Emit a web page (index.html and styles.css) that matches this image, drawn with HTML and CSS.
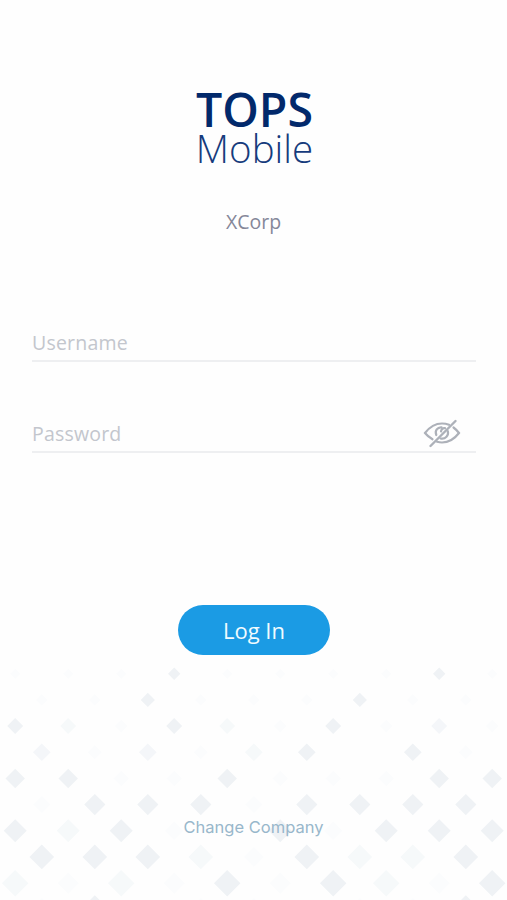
FILE: index.html
```html
<!DOCTYPE html>
<html lang="en">
<head>
<meta charset="utf-8">
<title>TOPS Mobile</title>
<link rel="stylesheet" href="styles.css">
</head>
<body>
<main class="screen">
  <svg class="pattern" id="pattern" viewBox="0 0 507 240" aria-hidden="true"></svg>
  <header class="brand">
    <h1 class="logo"><span class="logo-top">TOPS</span><span class="logo-sub">Mobile</span></h1>
    <p class="company">XCorp</p>
  </header>
  <form class="form">
    <div class="field"><input class="input" type="text" placeholder="Username"></div>
    <div class="field">
      <input class="input" type="password" placeholder="Password">
      <svg class="eye" viewBox="0 0 38 30">
        <path d="M9.500 21.300C6.500 19.500 4 17.500 2 15C7 8.500 12.500 5.500 19 5.500C21.500 5.500 24 6 26 6.800M30.500 9.500C32.500 11 34.500 13 36 15C31 21.500 25.500 24.500 19 24.500C17.500 24.500 15.500 24.200 14 23.800"/>
        <path d="M13.300 17C11.500 12.500 14.500 9 18.500 9.300M18 13.500C18.300 11 20 9.800 22 10.200M17.500 20.500C22.500 21.500 26 17.500 24.800 13"/>
        <path class="slash" d="M7.500 28L32.500 3"/>
      </svg>
    </div>
    <button class="login" type="button">Log In</button>
  </form>
  <a class="change">Change Company</a>
</main>
<script src="pattern.js"></script>
</body>
</html>
```
FILE: styles.css
```css
* { box-sizing: border-box; }
body { margin: 0; background: #fefefe; font-family: "Open Sans", sans-serif; }
.screen { position: relative; height: 900px; overflow: hidden; display: flex; flex-direction: column; align-items: center; }
.pattern { position: absolute; left: 0; bottom: 0; width: 507px; height: 240px; z-index: -1; }
.tone-d { fill: #eff2f5; }
.tone-m { fill: #f4f6f9; }
.tone-l { fill: #f6f9fa; }
.tone-f { fill: #fbfcfd; }
.brand { display: flex; flex-direction: column; align-items: center; padding-top: 85px; }
.logo { margin: 0; padding-left: 2px; display: flex; flex-direction: column; align-items: center; color: #02296b; font-weight: 400; }
.logo-top { font-size: 46.500px; font-weight: 600; line-height: 48px; }
.logo-sub { font-size: 38.500px; font-weight: 300; line-height: 30px; color: #163b7c; }
.company { margin: 45px 0 0; font-size: 19.500px; line-height: 28px; color: #858799; }
.form { width: 445px; margin-top: 86px; padding-left: 1px; display: flex; flex-direction: column; align-items: center; }
.field { width: 100%; height: 40px; display: flex; align-items: center; border-bottom: 2px solid #eeeff1; margin-bottom: 51px; }
.input { flex: 1; min-width: 0; border: 0; padding: 2px 0 0; outline: 0; background: none; font: 19.500px "Open Sans", sans-serif; letter-spacing: 0.2px; }
.input::placeholder { color: #c3c6cd; opacity: 1; }
.eye { width: 38px; height: 30px; margin: 2px 15px 0 0; fill: none; stroke: #adb1b9; stroke-width: 2.200; stroke-linecap: round; }
.slash { stroke-width: 2.400; }
.login { margin-top: 101px; width: 152px; height: 50px; border: 0; border-radius: 25px; background: #1b9be4; color: #f1fbff; font: 22px "Open Sans", sans-serif; }
.change { margin-top: 161px; font: 16.500px/22px Inter, sans-serif; color: #98b7cb; }
```
FILE: pattern.js
```js
// One string per row; each letter is the tone of a diamond, "-" leaves a gap.
const rows = [
  "fffDffffDf",
  "ffDfffDff",
  "DLfDLfDfMf",
  "MfMfLD-Df",
  "DDffDfffDD",
  "fDDDfDDDD",
  "DLDf-DfDDD",
  "DDDLfDLLD",
  "LfLfDfDLfD",
  "fD-ff-ffD"
];
const svg = document.getElementById("pattern");
rows.forEach((row, r) => {
  const y = 13.7 + r * 26.18;
  const start = r % 2 ? 41.8 : 15.2;
  const size = 6.2 + r * 0.88;
  [...row].forEach((tone, i) => {
    if (tone === "-") return;
    const x = start + i * 53;
    const s = tone === "f" ? size * 0.8 : size;
    const shape = document.createElementNS("http://www.w3.org/2000/svg", "path");
    shape.setAttribute("d", `M${x} ${y - s}L${x + s} ${y}L${x} ${y + s}L${x - s} ${y}Z`);
    shape.setAttribute("class", "tone-" + tone.toLowerCase());
    svg.append(shape);
  });
});
```
